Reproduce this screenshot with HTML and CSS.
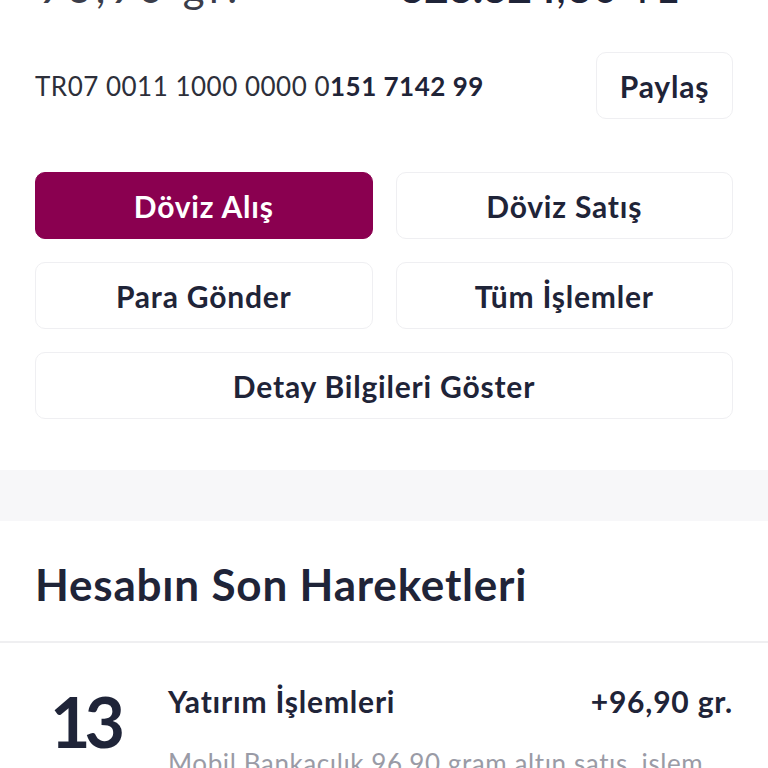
FILE: index.html
```html
<!DOCTYPE html>
<html lang="tr">
<head>
<meta charset="utf-8">
<link rel="stylesheet" href="styles.css">
</head>
<body>
<div class="page">
  <div class="balances">
    <div class="bal-left">96,90 gr.</div>
    <div class="bal-right"><b>323.324</b>,80 TL</div>
  </div>
  <div class="iban-row">
    <div class="iban">TR07 0011 1000 0000 0<b>151 7142 99</b></div>
    <button class="btn share">Paylaş</button>
  </div>
  <div class="actions">
    <button class="btn primary">Döviz Alış</button>
    <button class="btn">Döviz Satış</button>
    <button class="btn">Para Gönder</button>
    <button class="btn">Tüm İşlemler</button>
    <button class="btn wide">Detay Bilgileri Göster</button>
  </div>
  <div class="band"></div>
  <h2 class="section-title">Hesabın Son Hareketleri</h2>
  <div class="tx">
    <div class="tx-day">13</div>
    <div class="tx-body">
      <div class="tx-head">
        <span class="tx-title">Yatırım İşlemleri</span>
        <span class="tx-amount">+96,90 gr.</span>
      </div>
      <div class="tx-desc">Mobil Bankacılık 96,90 gram altın satış, işlem</div>
    </div>
  </div>
</div>
</body>
</html>
```
FILE: styles.css
```css
* { box-sizing: border-box; }
html, body { margin: 0; padding: 0; background: #fff; }
body {
  font-family: "Lato", "Open Sans", sans-serif;
  color: #1f2438;
  overflow: hidden;
}
.page { width: 768px; }
.balances {
  display: flex;
  padding: 0 35px 0 38px;
  margin-top: -33px;
  height: 40px;
  line-height: 40px;
  font-size: 42px;
}
.bal-left { color: #3b3d4a; width: 362px; letter-spacing: 4.5px; }
.bal-right { color: #1f2438; letter-spacing: 1.5px; }
.bal-right b { font-weight: 900; letter-spacing: 0; }
.iban-row {
  display: flex;
  align-items: center;
  justify-content: space-between;
  padding: 0 35px;
  margin-top: 45px;
}
.iban { font-size: 26px; color: #2d2f3a; letter-spacing: 0.5px; }
.iban b { font-weight: 700; color: #1f2438; }
.btn {
  font-family: inherit;
  background: #fff;
  border: 1.5px solid #efeff2;
  border-radius: 10px;
  color: #1f2438;
  font-size: 30px;
  font-weight: 700;
  letter-spacing: 0.8px;
  height: 67px;
  padding: 0;
  cursor: pointer;
}
.share { width: 137px; height: 67px; }
.actions {
  display: grid;
  grid-template-columns: 1fr 1fr;
  gap: 23px;
  padding: 0 35px;
  margin-top: 53px;
}
.actions .primary { background: #8a0050; border-color: #8a0050; color: #fff; }
.actions .wide { grid-column: 1 / 3; }
.band { height: 51px; background: #f7f7f9; margin-top: 51px; }
.section-title {
  margin: 0;
  padding: 0 35px;
  height: 122px;
  line-height: 126px;
  font-size: 44px;
  font-weight: 700;
  letter-spacing: 0.8px;
  border-bottom: 2px solid #efeff1;
}
.tx {
  display: flex;
  padding: 38px 35px 0 50px;
  gap: 47px;
}
.tx-day {
  font-size: 70px;
  font-weight: 700;
  line-height: 72px;
  letter-spacing: -6px;
  margin-top: 4px;
  width: 71px;
}
.tx-body { flex: 1; }
.tx-head {
  display: flex;
  justify-content: space-between;
  font-size: 30px;
  font-weight: 700;
  letter-spacing: 0.8px;
  line-height: 40px;
}
.tx-desc {
  margin-top: 26px;
  font-size: 26px;
  letter-spacing: 0.6px;
  color: #9a9ba6;
  white-space: nowrap;
}
```
